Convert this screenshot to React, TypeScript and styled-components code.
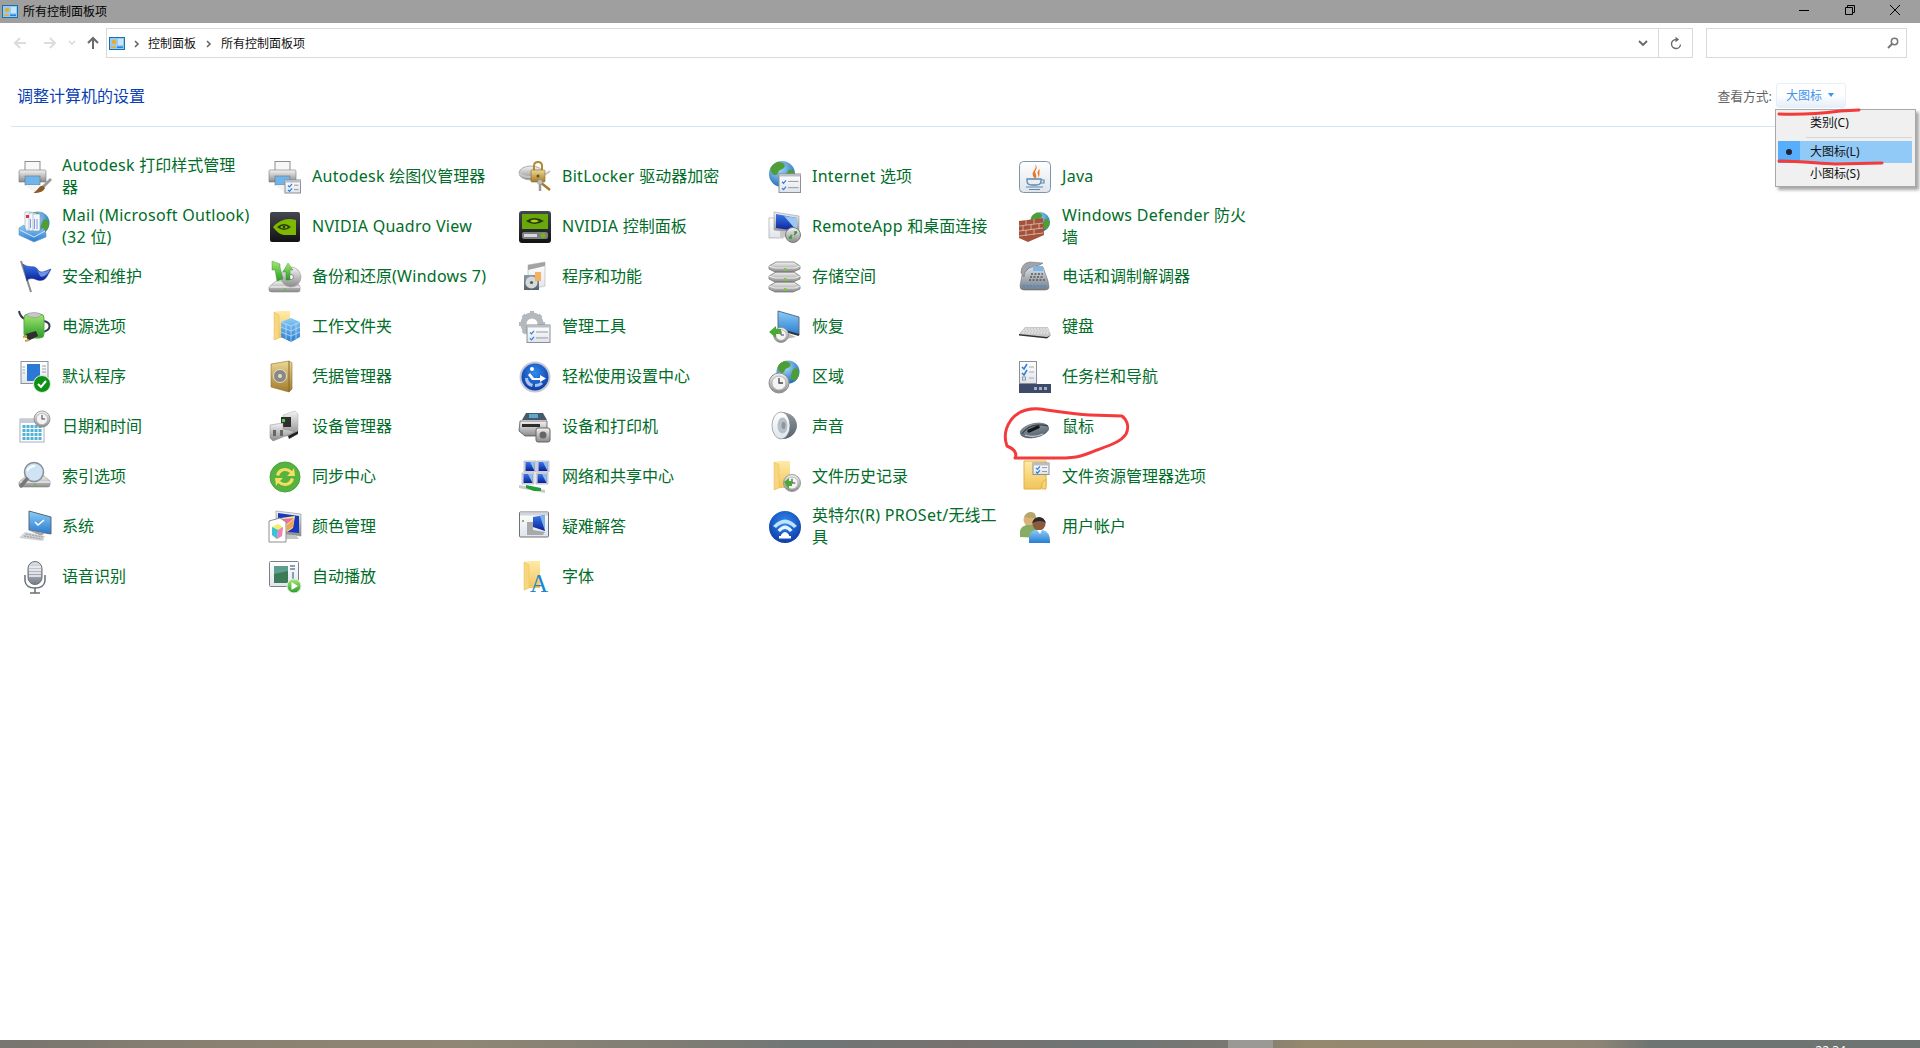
import React from "react";
import styled, { createGlobalStyle } from "styled-components";

const GlobalStyle = createGlobalStyle`
    html, body {
        margin: 0;
        padding: 0;
        background: #fff;
        overflow: hidden;
        font-family: "Noto Sans", "Noto Sans CJK SC", sans-serif;
    }
    * { box-sizing: border-box; }
`;

const Page = styled.div`
    position: relative;
    width: 1920px;
    height: 1048px;
    display: flex;
    flex-direction: column;
    overflow: hidden;
    background: #fff;
`;

const TitleBar = styled.div`
    height: 23px;
    flex: none;
    display: flex;
    align-items: center;
    background: #9f9f9f;
    padding: 0 2px 0 2px;
    font-size: 12px;
    color: #000;
`;

const TitleText = styled.span`
    margin-left: 5px;
    padding-bottom: 1px;
    flex: 1;
`;

const WindowButton = styled.div`
    width: 45.5px;
    height: 20px;
    display: flex;
    align-items: center;
    justify-content: center;
    margin-top: -3px;
`;

const NavRow = styled.div`
    height: 35px;
    flex: none;
    display: flex;
    padding: 5px 13px 0 0;
`;

const NavButtons = styled.div`
    width: 106px;
    flex: none;
    display: flex;
    align-items: center;
    padding-left: 13px;
`;

const NavButton = styled.div<{ $w: number }>`
    width: ${(p) => p.$w}px;
    display: flex;
    justify-content: flex-start;
`;

const AddressBox = styled.div`
    flex: 1;
    height: 30px;
    display: flex;
    align-items: center;
    border: 1px solid #d9d9d9;
    padding-left: 2px;
    font-size: 12px;
    color: #111;
`;

const Crumb = styled.span`
    white-space: nowrap;
`;

const CrumbSep = styled.span<{ $w: number }>`
    width: ${(p) => p.$w}px;
    display: flex;
    justify-content: center;
    margin-top: 1px;
`;

const AddressEnd = styled.div`
    margin-left: auto;
    height: 100%;
    display: flex;
`;

const AddressDrop = styled.div`
    width: 32px;
    display: flex;
    align-items: center;
    justify-content: center;
    border-right: 1px solid #d9d9d9;
`;

const AddressRefresh = styled.div`
    width: 33px;
    display: flex;
    align-items: center;
    justify-content: center;
`;

const SearchBox = styled.div`
    width: 201px;
    height: 30px;
    margin-left: 13px;
    border: 1px solid #d9d9d9;
    display: flex;
    align-items: center;
    justify-content: flex-end;
    padding-right: 7px;
`;

const HeaderRow = styled.div`
    height: 69px;
    flex: none;
    margin: 0 11px;
    padding: 6px 0 0 6px;
    display: flex;
    align-items: center;
    border-bottom: 1px solid #d8e6f2;
`;

const Heading = styled.h1`
    margin: 0;
    font-size: 16px;
    font-weight: 400;
    color: #0a3fb4;
    flex: 1;
`;

const ViewLabel = styled.span`
    font-size: 12.8px;
    color: #666;
    margin-right: 4px;
`;

const ViewButton = styled.div`
    width: 70px;
    height: 25px;
    margin-right: 63px;
    display: flex;
    align-items: center;
    padding-left: 9px;
    gap: 6px;
    font-size: 12px;
    color: #3f93f2;
    border: 1px solid #e6eef6;
    border-radius: 3px;
    background: linear-gradient(#fff 0%, #fff 45%, #e6eef8 100%);
`;

const ViewCaret = styled.span`
    width: 0;
    height: 0;
    border-left: 3.5px solid transparent;
    border-right: 3.5px solid transparent;
    border-top: 4px solid #3f93f2;
`;

const Grid = styled.div`
    flex: 1;
    display: grid;
    grid-template-columns: repeat(5, 250px);
    grid-auto-rows: 50px;
    align-content: start;
    padding: 25px 0 0 19px;
`;

const Item = styled.div`
    display: flex;
    align-items: center;
    gap: 11px;
`;

const Icon = styled.svg`
    width: 32px;
    height: 32px;
    flex: none;
    overflow: visible;
`;

const Label = styled.div`
    margin-bottom: 2px;
    font-size: 16px;
    line-height: 22px;
    color: #006d28;
`;

const LabelLine = styled.div`
    white-space: nowrap;
`;

const Latin = styled.span`
    letter-spacing: 0.28px;
`;

const Taskbar = styled.div`
    height: 8px;
    flex: none;
    display: flex;
    overflow: hidden;
    background: linear-gradient(90deg, #77756f 0%, #8b8172 12%, #8f8675 24%, #7d7c74 36%, #707676 42%, #76716f 50%, #6f7575 58%, #7a7872 64%, #95896f 68%, #8f8576 83%, #6e7472 86%, #6e7472 100%);
`;

const TaskActive = styled.div`
    width: 45px;
    margin-left: 1228px;
    background: #9a9996;
`;

const TaskClock = styled.div`
    margin-left: auto;
    margin-right: 74px;
    padding-top: 3px;
    font-size: 12px;
    line-height: 16px;
    color: #fff;
`;

const Menu = styled.div`
    position: absolute;
    top: 109px;
    left: 1775px;
    width: 141px;
    height: 78px;
    padding: 2px;
    background: #f0f0f0;
    border: 1px solid #a8a8a8;
    box-shadow: 3px 3px 3px rgba(0, 0, 0, 0.35);
    font-size: 12px;
    color: #111;
`;

const MenuItem = styled.div<{ $selected?: boolean; $h: number }>`
    height: ${(p) => p.$h}px;
    display: flex;
    align-items: center;
    margin-right: 1px;
    padding-bottom: 2px;
    background: ${(p) => (p.$selected ? "#91c9f7" : "transparent")};
`;

const MenuCheck = styled.div<{ $selected?: boolean }>`
    width: 22px;
    align-self: stretch;
    margin-right: 10px;
    margin-bottom: -2px;
    display: flex;
    align-items: center;
    justify-content: center;
    background: ${(p) => (p.$selected ? "#57aefb" : "transparent")};
`;

const MenuDot = styled.span`
    width: 6px;
    height: 6px;
    border-radius: 50%;
    background: #223;
`;

const MenuSep = styled.div`
    height: 1px;
    margin: 3px 1px 3px 28px;
    background: #d4d4d4;
`;

const Marks = styled.svg`
    position: absolute;
    top: 0;
    left: 0;
    width: 1920px;
    height: 1048px;
    pointer-events: none;
`;

const HiddenDefs = styled.svg`
    position: absolute;
    width: 0;
    height: 0;
`;

const Grads = () => (
    <HiddenDefs>
        <defs>
            {([
                ["gray", "#f4f4f4", "#8a8a8a"],
                ["steel", "#dfe4ea", "#747c86"],
                ["blue", "#8bcdf8", "#2a7bd0"],
                ["deep", "#3a78ea", "#0a1f96"],
                ["green", "#a5e872", "#2b9a28"],
                ["gold", "#ecd893", "#a27a2a"],
                ["folder", "#ffeaa8", "#f0c458"],
                ["dark", "#44494f", "#111214"],
                ["paper", "#ffffff", "#dfe4ec"],
                ["slate", "#8f9aa3", "#56626c"],
            ] as const).map(([id, a, b]) => (
                <linearGradient key={id} id={id} x1="0" y1="0" x2="0" y2="1">
                    <stop offset="0" stopColor={a} />
                    <stop offset="1" stopColor={b} />
                </linearGradient>
            ))}
            <radialGradient id="sphere" cx="0.4" cy="0.3" r="0.8">
                <stop offset="0" stopColor="#a5dcf8" />
                <stop offset="1" stopColor="#135fb4" />
            </radialGradient>
            <radialGradient id="ball" cx="0.5" cy="0.35" r="0.75">
                <stop offset="0" stopColor="#2f8cf0" />
                <stop offset="1" stopColor="#0b2f9c" />
            </radialGradient>
        </defs>
    </HiddenDefs>
);

const Globe = ({ x, y, r }: { x: number; y: number; r: number }) => (
    <g transform={`translate(${x} ${y}) scale(${r / 10})`}>
        <circle r="10" fill="url(#sphere)" />
        <path d="M-3-9.5C0-9 3-8 2-5.500S-2-4-3-1-7 1-8.500-2-7-8-3-9.500zM5-3C8-4 10-2 9.500 2S6 8 4 7 2 2 5-3z" fill="#4f9e35" />
    </g>
);

const Clock = ({ x, y, r }: { x: number; y: number; r: number }) => (
    <g transform={`translate(${x} ${y}) scale(${r / 10})`}>
        <circle r="10" fill="url(#gray)" stroke="#8d8d8d" />
        <circle r="7" fill="#f4f4f4" stroke="#b5b5b5" />
        <path d="M0-5V0H4" fill="none" stroke="#444" strokeWidth="1.300" />
    </g>
);

const Folder = ({ x = 0, y = 0 }: { x?: number; y?: number }) => (
    <g transform={`translate(${x} ${y})`}>
        <path d="M0 1 5 0H16V27H5L0 29Z" fill="url(#folder)" />
        <path d="M0 1V29L5 27V4Z" fill="#f7d680" stroke="#e5bc58" strokeWidth=".5" />
    </g>
);

const ListWindow = ({ x, y, w, h }: { x: number; y: number; w: number; h: number }) => (
    <g transform={`translate(${x} ${y})`}>
        <rect width={w} height={h} fill="url(#paper)" stroke="#8c8f96" />
        <rect width={w} height="2.500" fill="#b9bdc5" />
        <path d={`M3 ${h * 0.42}l1.500 1.500 2.500-3M3 ${h * 0.76}l1.500 1.500 2.500-3`} stroke="#2b7fd8" strokeWidth="1.200" fill="none" />
        <path d={`M9 ${h * 0.4}H${w - 2}M9 ${h * 0.74}H${w - 2}`} stroke="#999" />
    </g>
);

const Printer = () => (
    <>
        <rect x="6" y="0.500" width="15" height="10" fill="#f8f8f8" stroke="#8d8d8d" />
        <path d="M1 9H26Q27 9 27 11V21H21V18H6V21H0V11Q0 9 1 9Z" fill="url(#gray)" stroke="#777" strokeWidth=".6" />
        <rect x="6" y="15" width="15" height="9" fill="#6fb4ea" stroke="#777" strokeWidth=".6" />
        <path d="M6 24H21L23 31H15L6 24Z" fill="#f2f2f2" />
    </>
);

const DriveBase = ({ y = 20 }: { y?: number }) => (
    <g transform={`translate(0 ${y})`}>
        <path d="M7 0H25L31 5V9Q31 11 29 11H3Q0 11 0 9V6Z" fill="url(#gray)" stroke="#8c8c8c" strokeWidth=".6" />
        <path d="M0.500 6H31" stroke="#fff" />
        <rect x="15" y="7.500" width="2" height="2" fill="#56c23d" />
    </g>
);

const icons: Record<string, React.ReactNode> = {
    printerBrush: (
        <>
            <Printer />
            <path d="M31 17 33 19 25 27 23 25Z" fill="#9a9a9a" />
            <path d="M23.500 24.500 26 27C25 30 21 32 14.500 32 18 30 20 25 23.500 24.500Z" fill="#8a5a2c" />
        </>
    ),
    printerList: (
        <>
            <Printer />
            <ListWindow x={16} y={19} w={15.500} h={13} />
        </>
    ),
    bitlocker: (
        <>
            <ellipse cx="12" cy="12" rx="12" ry="7" fill="url(#gray)" stroke="#aaa" />
            <path d="M1 12C1 17 23 18 31 10" fill="none" stroke="#c7c7c7" strokeWidth="2" />
            <path d="M15 10V5Q15 1 19 1T23 5V10" fill="none" stroke="#b08a34" strokeWidth="2" />
            <rect x="12" y="9" width="14" height="12" rx="1" fill="url(#gold)" stroke="#8a6a22" strokeWidth=".6" />
            <circle cx="19" cy="15" r="1.500" fill="#6a4f14" />
            <path d="M21 21 31 29" stroke="#a27a2a" strokeWidth="2.500" />
            <path d="M21 20V30" stroke="#9b9b9b" strokeWidth="2.500" />
            <circle cx="21" cy="21" r="2.500" fill="#c0c0c0" stroke="#888" strokeWidth=".5" />
        </>
    ),
    internet: (
        <>
            <Globe x={13} y={13} r={13} />
            <ListWindow x={10} y={13} w={21.500} h={18.500} />
        </>
    ),
    java: (
        <>
            <rect x=".5" y=".5" width="31" height="31" rx="4" fill="url(#paper)" stroke="#7e96ad" />
            <path d="M16 3C19 8 12 10 14 15 15 17 16 17 16 18 20 14 14 12 17 9 18 7 18 5 16 3Z" fill="#e8772a" />
            <path d="M21 8C17 11 19 13 19.500 15 19.500 16 18.500 17 18.500 17 22 15 19.500 12 21 8Z" fill="#e8772a" />
            <path d="M8 18H22V20Q22 24 17 24H13Q8 24 8 20Z" fill="none" stroke="#5c88aa" strokeWidth="1.300" />
            <path d="M22 19H25V22H21M7 26H24M10 28.500H21" fill="none" stroke="#5c88aa" strokeWidth="1.200" />
        </>
    ),
    mail: (
        <>
            <Globe x={19} y={12} r={11.500} />
            <rect x="6" y="1" width="7" height="18" fill="#f4f6fb" stroke="#93a6c6" strokeWidth=".6" />
            <rect x="10" y="2" width="7" height="18" fill="#f4f6fb" stroke="#93a6c6" strokeWidth=".6" />
            <rect x="14" y="3" width="7" height="18" fill="#f4f6fb" stroke="#93a6c6" strokeWidth=".6" />
            <rect x="7" y="4" width="3" height="3" fill="#e23a2a" />
            <path d="M11.500 8V17M15.500 8V18M18 8V18" stroke="#7f9dce" />
            <path d="M0 17 5 14 7 20H20L24 17 27 22V26L15 31 0 24Z" fill="url(#blue)" stroke="#6f94bf" strokeWidth=".6" />
            <path d="M1 19 15 26 26 20" fill="none" stroke="#d4e6f7" />
        </>
    ),
    nvidiaQ: (
        <>
            <rect x="1" y="1" width="30" height="30" rx="2" fill="url(#dark)" />
            <path d="M4 16Q14 5 27 9V24H15Q9 23 4 16Z" fill="#7fb800" />
            <path d="M8 16Q15 10 22 16 15 22 8 16Z" fill="#2a3d05" />
            <path d="M11 16Q15 13 19 16 15 19 11 16Z" fill="#9ccf1d" />
            <circle cx="15" cy="16" r="1.500" fill="#2a3d05" />
        </>
    ),
    nvidiaC: (
        <>
            <rect y="0" width="32" height="32" rx="3" fill="url(#dark)" />
            <rect x="3" y="3" width="26" height="15" fill="#6aa80a" />
            <path d="M7 10Q15 4 25 10 15 16 7 10Z" fill="#253608" />
            <path d="M11 10Q15 7 20 10 15 13 11 10Z" fill="#a3d41f" />
            <rect x="3" y="21" width="26" height="7" rx="2" fill="#7c7f7d" />
            <rect x="5" y="23" width="13" height="3" fill="#d8d8d8" />
            <circle cx="24" cy="24.500" r="2.500" fill="#74b51a" />
        </>
    ),
    remote: (
        <>
            <rect x="0" y="7" width="14" height="20" fill="url(#paper)" stroke="#9a9a9a" strokeWidth=".6" />
            <path d="M5 1 30 5V22L5 19Z" fill="url(#gray)" stroke="#9a9a9a" strokeWidth=".6" />
            <path d="M7 3 28 7V20L7 17Z" fill="url(#deep)" />
            <path d="M15 5 28 7V20Z" fill="#9bc7f5" />
            <path d="M11 20 H20V26H11Z" fill="#c7c7c7" />
            <circle cx="24" cy="24" r="7.500" fill="url(#gray)" stroke="#7d7d7d" />
            <path d="M20 27 23 24M28 21 25 24M20 27H23M28 21H25" stroke="#2e9a33" strokeWidth="1.500" />
        </>
    ),
    defender: (
        <>
            <Globe x={21} y={11} r={10} />
            <path d="M0 10 24 7 25 24 9 31 0 27Z" fill="#a5523a" />
            <path d="M0 15 24 12M0 20 24 17M0 25 24 22M7 9V14M15 8V13M4 15V20M12 14V19M20 13V18M7 19V25M15 18V24" stroke="#e0c3b4" strokeWidth=".8" />
        </>
    ),
    flag: (
        <>
            <path d="M2 0 12 31" stroke="#8a8a8a" strokeWidth="2" />
            <path d="M4 3C10 8 16 3 19 9 22 13 26 10 32 8 29 14 27 18 24 19 18 21 16 16 10 18 8 18 9 19 8 20Z" fill="url(#deep)" stroke="#1c2f8e" strokeWidth=".5" />
            <path d="M18 9C21 13 26 11 31 9 28 14 24 17 21 15Z" fill="#6d93e6" />
        </>
    ),
    backup: (
        <>
            <DriveBase y={20} />
            <circle cx="22" cy="16" r="10" fill="url(#gray)" stroke="#999" strokeWidth=".6" />
            <circle cx="22" cy="16" r="2.500" fill="#fff" stroke="#888" />
            <path d="M3 0 11 3 11 6 14 18 8 20 6 9 3 9Z" fill="url(#green)" stroke="#2b8a2a" strokeWidth=".4" />
            <path d="M17 19 17 11 14 11 19 2 24 9 21 9 21 19Z" fill="url(#green)" stroke="#2b8a2a" strokeWidth=".4" />
        </>
    ),
    programs: (
        <>
            <path d="M9 4 26 1V25L9 29Z" fill="url(#paper)" stroke="#b4b4b4" strokeWidth=".6" />
            <path d="M9 4 26 1V5L9 9Z" fill="#a3a3a3" />
            <rect x="5" y="14" width="15" height="15" fill="url(#slate)" />
            <circle cx="12.500" cy="21.500" r="6" fill="#d4dadc" />
            <circle cx="12.500" cy="21.500" r="1.600" fill="#555" />
            <rect x="16" y="11" width="6" height="9" fill="#f5b060" />
        </>
    ),
    storage: (
        <>
            {[21, 11, 1].map((y) => (
                <g key={y} transform={`translate(0 ${y})`}>
                    <path d="M7 0H25L31 4V7L24 10H6L0 7V4Z" fill="url(#gray)" stroke="#6a6a6a" strokeWidth=".7" />
                    <path d="M6 6H26L31 4M6 6 0 4" fill="none" stroke="#eee" />
                    <rect x="15" y="6" width="2.500" height="2.500" fill="#7ccf3b" />
                </g>
            ))}
        </>
    ),
    phone: (
        <>
            <path d="M1 25 3 14 12 5 24 6 29 20 30 26Q30 29 26 29H5Q1 29 1 25Z" fill="url(#steel)" stroke="#707070" strokeWidth=".6" />
            <path d="M2 12Q2 2 11 1L24 2Q21 5 13 6 5 8 5 16Z" fill="#9fa5ab" stroke="#666" strokeWidth=".5" />
            <rect x="14" y="5" width="10" height="5" fill="#7fb6e3" />
            <path d="M12 13H24M11 16H25M10 19H26" stroke="#555" strokeDasharray="2 1.500" strokeWidth="1.500" />
            <path d="M4 25H27" stroke="#4f8fc9" strokeWidth="2" strokeDasharray="2 1.500" />
        </>
    ),
    power: (
        <>
            <path d="M0 0Q1 6 6 8M25 10C33 12 32 19 24 21L14 24" fill="none" stroke="#333b4d" strokeWidth="2" />
            <rect x="5" y="3" width="20" height="24" rx="4" fill="url(#green)" stroke="#5fa84a" />
            <ellipse cx="15" cy="4" rx="7" ry="2.500" fill="#c7c7c7" stroke="#888" strokeWidth=".5" />
            <path d="M7 23 17 20 19 25 9 30Z" fill="#2f2f2f" />
            <path d="M4 26 8 25M6 30 10 29" stroke="#c9a33e" strokeWidth="2" />
        </>
    ),
    workFolders: (
        <>
            <Folder x={5} y={0} />
            <path d="M12 11 22 7 31 11V26L22 31 12 26Z" fill="url(#blue)" />
            <path d="M12 11 22 15 31 11M22 15V31M12 16 22 20 31 16M12 21 22 25 31 21M17 13V28M27 13V28" fill="none" stroke="#c6e4f8" strokeWidth=".7" />
        </>
    ),
    admin: (
        <>
            <circle cx="13" cy="13" r="8.500" fill="none" stroke="#b4b9be" strokeWidth="6" />
            <path d="M13 0V5M13 21V26M0 13H5M21 13H26M4 4 8 8M22 4 18 8M4 22 8 18" stroke="#b4b9be" strokeWidth="4" />
            <ListWindow x={8} y={14} w={23} h={17.500} />
        </>
    ),
    recovery: (
        <>
            <path d="M9 0 30 6V24L9 18Z" fill="url(#blue)" stroke="#5d6e80" />
            <path d="M9 18 30 24" stroke="#333" strokeWidth="2" />
            <path d="M14 20 27 26 17 28Z" fill="#bcbcbc" />
            <Clock x={12} y={24} r={7.500} />
            <path d="M0 21 7 15V18H12V23H7V27Z" fill="#4aa934" />
        </>
    ),
    keyboard: (
        <>
            <path d="M6 16H29L32 24 28 27 0 23Z" fill="#c9c9c9" />
            <path d="M0 23 28 26 32 24 28 27.500 0 24.500Z" fill="#333" />
            <path d="M6 18H29M4 20H30M3 22H30" stroke="#efefef" strokeDasharray="2 1" />
        </>
    ),
    defaults: (
        <>
            <rect x="2" y="0.500" width="27" height="22" fill="url(#paper)" stroke="#8d919a" />
            <rect x="8" y="3" width="13" height="17" fill="#2b78d6" />
            <path d="M23 5H27M23 8H27M23 11H27M3.500 6H6M3.500 9H6M3.500 12H6" stroke="#9fa5ae" />
            <circle cx="23" cy="23" r="8.500" fill="#0e8f16" stroke="#e4f0e4" />
            <path d="M19 23 22 26 27 20" fill="none" stroke="#fff" strokeWidth="2" />
        </>
    ),
    safe: (
        <>
            <path d="M2 3 20 0 23 2V28L20 31 2 26Z" fill="url(#gold)" stroke="#8d6f2a" strokeWidth=".6" />
            <path d="M20 0V31" stroke="#85692a" />
            <circle cx="11" cy="15" r="6.500" fill="#8a8880" stroke="#eee" strokeWidth=".8" />
            <circle cx="11" cy="15" r="2" fill="#ddd" />
        </>
    ),
    ease: (
        <>
            <circle cx="16" cy="16" r="15.500" fill="#c4c9d4" />
            <circle cx="16" cy="16" r="13.500" fill="url(#ball)" />
            <circle cx="13" cy="8" r="2" fill="#fff" />
            <path d="M11 12 15 17H21V14L27 17.500 21 21V19H13L9 14Z" fill="#fff" />
            <path d="M6 17Q6 24 13 26L14 23Q9 21 9 17ZM16 26Q21 26 24 23L22 21Q20 23 16 23Z" fill="#a8c3ec" />
        </>
    ),
    region: (
        <>
            <Globe x={19} y={11} r={11.500} />
            <Clock x={10} y={22} r={10} />
        </>
    ),
    taskbar: (
        <>
            <rect x=".5" y=".5" width="17" height="22" fill="url(#paper)" stroke="#8c8f96" />
            <path d="M3 6 5 8 8 3M3 12 5 14 8 9" fill="none" stroke="#2b7fd8" strokeWidth="1.500" />
            <rect x="3.500" y="16" width="3" height="3" fill="none" stroke="#999" />
            <path d="M10 6H15M10 11H15M10 17H15" stroke="#aaa" />
            <rect x="0" y="23" width="32" height="9" fill="#3d4a69" />
            <path d="M15 26h3v3h-3zM20 26h3v3h-3zM25 26h3v3h-3z" fill="#a7aebd" />
        </>
    ),
    date: (
        <>
            <rect x="1" y="8" width="24" height="23" fill="#fff" stroke="#a8b0ba" />
            <rect x="1" y="8" width="24" height="4" fill="#c4ccd6" />
            {[0, 1, 2, 3].map((r) =>
                [0, 1, 2, 3, 4].map((c) => <rect key={`${r}${c}`} x={3.500 + c * 4} y={14 + r * 4} width="3" height="3" fill="#4fb2d8" />),
            )}
            <Clock x={23} y={8} r={8} />
        </>
    ),
    devmgr: (
        <>
            <path d="M14 4 26 0 29 3V20L19 25H14Z" fill="url(#gray)" stroke="#aaa" strokeWidth=".5" />
            <rect x="12" y="6" width="10" height="10" fill="#2e2e2e" />
            <rect x="13" y="8" width="3" height="3" fill="#4fd14f" />
            <path d="M1 14 14 12V18L24 20V22L4 30 1 27Z" fill="url(#gray)" stroke="#888" strokeWidth=".5" />
            <rect x="4" y="19" width="3" height="6" fill="#666" />
            <rect x="11" y="19" width="3" height="6" fill="#666" />
            <path d="M19 25 29 20 29 23 20 28Z" fill="#222" />
        </>
    ),
    devices: (
        <>
            <path d="M7 2H24L28 9H3Z" fill="#47596b" />
            <rect x="10" y="3" width="9" height="4" fill="#5ba8d0" />
            <path d="M1 10H28V20L24 25H6L0 20Z" fill="url(#gray)" stroke="#444" strokeWidth=".7" />
            <rect x="3" y="13" width="18" height="3" fill="#2d2d2d" />
            <rect x="17" y="17" width="14" height="14" rx="2" fill="url(#gray)" stroke="#666" />
            <circle cx="24" cy="24" r="3.500" fill="#666" />
        </>
    ),
    sound: (
        <>
            <path d="M12 1C22 1 28 8 28 14.500S22 28 14 28Z" fill="url(#slate)" />
            <ellipse cx="12" cy="14.500" rx="9" ry="13.500" fill="url(#paper)" stroke="#777" strokeWidth=".6" />
            <ellipse cx="13.500" cy="14.500" rx="5" ry="8" fill="#b6c0c8" />
            <ellipse cx="14.500" cy="14.500" rx="2" ry="3.500" fill="#8a96a0" />
        </>
    ),
    mouse: (
        <>
            <ellipse cx="15.500" cy="19.500" rx="14.500" ry="7" transform="rotate(-12 15.500 19.500)" fill="url(#slate)" stroke="#3f4a54" strokeWidth=".5" />
            <path d="M3 23C8 15 18 12 29 15" fill="none" stroke="#39424a" strokeWidth="1.200" />
            <path d="M10 20 19 16" stroke="#15181b" strokeWidth="3.500" strokeLinecap="round" />
            <path d="M6 24Q14 27 24 23" fill="none" stroke="#c4ccd2" strokeWidth="1.200" />
        </>
    ),
    index: (
        <>
            <DriveBase y={15} />
            <circle cx="15" cy="11" r="9.500" fill="#cfe3f5" stroke="#858f99" strokeWidth="1.500" />
            <path d="M8 10Q11 5 16 5" stroke="#fff" strokeWidth="2" fill="none" />
            <path d="M8 18 2 25" stroke="#777" strokeWidth="3.500" strokeLinecap="round" />
        </>
    ),
    sync: (
        <>
            <circle cx="16" cy="16" r="15" fill="#56b33f" stroke="#47a336" />
            <path d="M7 14Q9 7 16 7 20 7 23 10L25 7 26 15 18 15 21 12Q19 10 16 10 12 10 10 15Z" fill="#f5de63" />
            <path d="M25 18Q23 25 16 25 12 25 9 22L7 25 6 17 14 17 11 20Q13 22 16 22 20 22 22 17Z" fill="#f5de63" />
        </>
    ),
    network: (
        <>
            {[[5, 0], [18, 0], [3, 12], [17, 12]].map(([x, y]) => (
                <g key={`${x}${y}`}>
                    <path d={`M${x} ${y}H${x + 12}V${y + 11}H${x}Z`} fill="#e2e4e8" stroke="#8b8f96" strokeWidth=".5" />
                    <path d={`M${x + 1.500} ${y + 1}H${x + 10.500}V${y + 10}H${x + 1.500}Z`} fill="url(#deep)" />
                    <path d={`M${x + 6} ${y + 1}H${x + 10.500}V${y + 10}Z`} fill="#8fbdf0" />
                </g>
            ))}
            <path d="M0 24 26 29V32L0 27Z" fill="#c9c9c9" />
            <path d="M7 24 22 27 22 30 15 30 7 27Z" fill="#1f9e36" />
        </>
    ),
    history: (
        <>
            <Folder x={5} y={0} />
            <Clock x={23} y={22} r={8.500} />
            <path d="M15 21 20 17V20H23V25H20V29Z" fill="#4aa934" />
        </>
    ),
    explorer: (
        <>
            <path d="M5 0H27V26H22V28H5Z" fill="url(#folder)" stroke="#e3b33f" />
            <path d="M27 18V28H23V22Z" fill="#f7d680" stroke="#e3b33f" />
            <ListWindow x={14} y={2} w={16} h={11.500} />
        </>
    ),
    system: (
        <>
            <path d="M10 0 32 6V23L10 19Z" fill="url(#blue)" stroke="#596673" />
            <path d="M16 11 19 14 25 9" fill="none" stroke="#fff" strokeWidth="1.500" />
            <path d="M9 19 26 22 22 25Z" fill="#a5a5a5" />
            <path d="M6 21 26 25 24 30 0 27Z" fill="#d0d3d5" />
            <path d="M7 23 24 26M5 25 23 28" stroke="#9a9d9f" strokeDasharray="2 1" />
        </>
    ),
    color: (
        <>
            <path d="M7 0 32 3V25L7 22Z" fill="url(#gray)" stroke="#8b8b8b" strokeWidth=".6" />
            <path d="M9 2 30 5V22L9 20Z" fill="#1a37c0" />
            <path d="M12 7 26 5 24 17 18 21 13 15Z" fill="#f6ef86" />
            <path d="M13 8 25 7 18 13Z" fill="#ee6fa3" />
            <path d="M18 14 25 8 24 16 18 20Z" fill="#f3a15a" />
            <path d="M14 24H27L30 28H18Z" fill="#c5c5c5" />
            <path d="M0 10 11 7 17 11V31H0Z" fill="#fff" stroke="#8e8e8e" />
            <path d="M3 16 9 13 14 16 13 25 8 28 3 24Z" fill="#f0ef66" />
            <path d="M3 16 9 19 8 28 3 24Z" fill="#38c3d8" />
            <path d="M9 19 14 16 13 25 8 28Z" fill="#ef7fc0" />
        </>
    ),
    trouble: (
        <>
            <rect x=".5" y="1" width="29" height="25" rx="1" fill="url(#paper)" stroke="#6e7178" />
            <rect x="1" y="1.500" width="28" height="3" fill="#d2d5db" />
            <path d="M14 6 26 4V20L14 16Z" fill="url(#deep)" />
            <path d="M21 5 26 4V20Z" fill="#7cb0ee" />
            <path d="M8 11H14V24H8ZM14 19 26 21 24 24H14Z" fill="#a7aaa8" />
            <rect x="3" y="9" width="2" height="2" fill="#6ccb3b" />
        </>
    ),
    intel: (
        <>
            <circle cx="16" cy="16" r="16" fill="url(#ball)" />
            <path d="M4 15Q16 2 28 15L25 17Q16 8 7 17Z" fill="#bfe2fb" />
            <path d="M8.500 19Q16 10 23.500 19L21 21Q16 15 11 21Z" fill="#e6f4fe" />
            <path d="M12 24Q16 18 20 24L20 25H12Z" fill="#fff" />
            <rect x="10" y="25" width="12" height="2.500" fill="#fff" />
        </>
    ),
    users: (
        <>
            <circle cx="11" cy="9" r="6.500" fill="#d9b37a" />
            <path d="M5 6Q7 1 12 1T17 7L10 7Z" fill="#b8a56a" />
            <path d="M1 26V20Q2 15 8 14H14Q20 15 20 22V27Z" fill="#86ad63" />
            <circle cx="20" cy="13" r="6.500" fill="#8a5a3c" />
            <path d="M13 12Q15 6 20 6T27 12Q22 8 13 12Z" fill="#2a2a2a" />
            <path d="M10 32V26Q11 20 17 19H24Q31 21 31 30V32Z" fill="url(#blue)" />
            <path d="M18 19 21 23 23 19Z" fill="#fff" />
        </>
    ),
    speech: (
        <>
            <rect x="9" y="0.500" width="14" height="23" rx="7" fill="url(#steel)" stroke="#6a6d74" />
            <path d="M10 6H22M10 9H22M10 12H22M10 15H22" stroke="#f2f2f7" strokeWidth="1.300" />
            <path d="M6 14V20Q7 27 16 27T26 20V14" fill="none" stroke="#6a6d74" strokeWidth="1.500" />
            <path d="M16 27V32M11 32H21" stroke="#6a6d74" strokeWidth="1.500" />
        </>
    ),
    autoplay: (
        <>
            <rect x=".5" y="0.500" width="29" height="25" rx="1" fill="url(#paper)" stroke="#7d8087" />
            <rect x="5" y="5" width="14" height="17" fill="#5f9e8e" />
            <path d="M5 13 19 10V22H5Z" fill="#3d7a57" />
            <path d="M21 5H26M21 8H26M24 11V20" stroke="#67819c" strokeWidth="1.500" />
            <circle cx="25" cy="25" r="7" fill="url(#green)" stroke="#e4f0e4" />
            <path d="M22.500 21 29 25 22.500 29Z" fill="#fff" />
        </>
    ),
    fonts: (
        <>
            <Folder x={5} y={0} />
            <text x="11" y="31" fontSize="25" fontFamily="'Liberation Serif', serif" fill="#1c86d0">A</text>
        </>
    ),
};

// "\n" marks where the control panel wraps a long name
const items: [string, string][] = [
    ["printerBrush", "Autodesk 打印样式管理\n器"],
    ["printerList", "Autodesk 绘图仪管理器"],
    ["bitlocker", "BitLocker 驱动器加密"],
    ["internet", "Internet 选项"],
    ["java", "Java"],
    ["mail", "Mail (Microsoft Outlook)\n(32 位)"],
    ["nvidiaQ", "NVIDIA Quadro View"],
    ["nvidiaC", "NVIDIA 控制面板"],
    ["remote", "RemoteApp 和桌面连接"],
    ["defender", "Windows Defender 防火\n墙"],
    ["flag", "安全和维护"],
    ["backup", "备份和还原(Windows 7)"],
    ["programs", "程序和功能"],
    ["storage", "存储空间"],
    ["phone", "电话和调制解调器"],
    ["power", "电源选项"],
    ["workFolders", "工作文件夹"],
    ["admin", "管理工具"],
    ["recovery", "恢复"],
    ["keyboard", "键盘"],
    ["defaults", "默认程序"],
    ["safe", "凭据管理器"],
    ["ease", "轻松使用设置中心"],
    ["region", "区域"],
    ["taskbar", "任务栏和导航"],
    ["date", "日期和时间"],
    ["devmgr", "设备管理器"],
    ["devices", "设备和打印机"],
    ["sound", "声音"],
    ["mouse", "鼠标"],
    ["index", "索引选项"],
    ["sync", "同步中心"],
    ["network", "网络和共享中心"],
    ["history", "文件历史记录"],
    ["explorer", "文件资源管理器选项"],
    ["system", "系统"],
    ["color", "颜色管理"],
    ["trouble", "疑难解答"],
    ["intel", "英特尔(R) PROSet/无线工\n具"],
    ["users", "用户帐户"],
    ["speech", "语音识别"],
    ["autoplay", "自动播放"],
    ["fonts", "字体"],
];

// latin runs are a touch wider in the original font than in Noto Sans
const renderLine = (line: string) =>
    line.split(/([\x20-\x7e]+)/).map((part, i) => (i % 2 ? <Latin key={i}>{part}</Latin> : part));

const PanelGlyph = () => (
    <svg width="16" height="13" viewBox="0 0 16 13">
        <rect x=".5" y=".5" width="15" height="12" fill="#8fcdf5" stroke="#1d6fa8" />
        <circle cx="5" cy="5" r="2.200" fill="#f5a623" />
        <path d="M9 3H14M9 5H14M9 7H14" stroke="#fff" />
        <rect x="2" y="9.500" width="5" height="1.500" fill="#f5a623" />
        <rect x="8" y="9.500" width="6" height="1.500" fill="#2b7fd8" />
    </svg>
);

const Arrow = ({ dir, color }: { dir: "left" | "right" | "up"; color: string }) => {
    const d = {
        left: "M13 7H2M7 2 2 7 7 12",
        right: "M1 7H12M7 2 12 7 7 12",
        up: "M7 13V2M2 7 7 2 12 7",
    }[dir];
    return (
        <svg width="14" height="14" viewBox="0 0 14 14">
            <path d={d} fill="none" stroke={color} strokeWidth="2" />
        </svg>
    );
};

const SmallChevron = () => (
    <svg width="6" height="8" viewBox="0 0 6 8">
        <path d="M1 1 4 4 1 7" fill="none" stroke="#666" strokeWidth="1.600" />
    </svg>
);

export default function App() {
    return (
        <Page>
            <GlobalStyle />
            <Grads />
            <TitleBar>
                <PanelGlyph />
                <TitleText>所有控制面板项</TitleText>
                <WindowButton>
                    <svg width="10" height="10" viewBox="0 0 10 10">
                        <path d="M0 5.500H10" stroke="#000" />
                    </svg>
                </WindowButton>
                <WindowButton>
                    <svg width="10" height="10" viewBox="0 0 10 10">
                        <path d="M.5 2.500H7.500V9.500H.5ZM2.500 2.500V.5H9.500V7.500H7.500" fill="none" stroke="#000" />
                    </svg>
                </WindowButton>
                <WindowButton>
                    <svg width="10" height="10" viewBox="0 0 10 10">
                        <path d="M0 0 10 10M10 0 0 10" stroke="#000" />
                    </svg>
                </WindowButton>
            </TitleBar>
            <NavRow>
                <NavButtons>
                    <NavButton $w={30}>
                        <Arrow dir="left" color="#dcdcdc" />
                    </NavButton>
                    <NavButton $w={25}>
                        <Arrow dir="right" color="#dcdcdc" />
                    </NavButton>
                    <NavButton $w={18}>
                        <svg width="8" height="6" viewBox="0 0 8 6">
                            <path d="M1 1 4 4 7 1" fill="none" stroke="#d8d8d8" strokeWidth="1.500" />
                        </svg>
                    </NavButton>
                    <NavButton $w={14}>
                        <Arrow dir="up" color="#6a6a6a" />
                    </NavButton>
                </NavButtons>
                <AddressBox>
                    <PanelGlyph />
                    <CrumbSep $w={23}>
                        <SmallChevron />
                    </CrumbSep>
                    <Crumb>控制面板</Crumb>
                    <CrumbSep $w={25}>
                        <SmallChevron />
                    </CrumbSep>
                    <Crumb>所有控制面板项</Crumb>
                    <AddressEnd>
                        <AddressDrop>
                            <svg width="10" height="7" viewBox="0 0 10 7">
                                <path d="M1 1 5 5 9 1" fill="none" stroke="#666" strokeWidth="1.800" />
                            </svg>
                        </AddressDrop>
                        <AddressRefresh>
                            <svg width="12" height="13" viewBox="0 0 12 13">
                                <path d="M5.500 .5 8 2.500 5.500 4.500M7.500 2.500H6A4.500 4.500 0 1 0 10.500 7.500" fill="none" stroke="#6a6a6a" strokeWidth="1.400" />
                            </svg>
                        </AddressRefresh>
                    </AddressEnd>
                </AddressBox>
                <SearchBox>
                    <svg width="12" height="12" viewBox="0 0 12 12">
                        <circle cx="7.500" cy="4.500" r="3.200" fill="none" stroke="#777" strokeWidth="1.500" />
                        <path d="M5 7 1 11" stroke="#777" strokeWidth="2" />
                    </svg>
                </SearchBox>
            </NavRow>
            <HeaderRow>
                <Heading>调整计算机的设置</Heading>
                <ViewLabel>查看方式:</ViewLabel>
                <ViewButton>
                    大图标
                    <ViewCaret />
                </ViewButton>
            </HeaderRow>
            <Grid>
                {items.map(([icon, label]) => (
                    <Item key={label}>
                        <Icon viewBox="0 0 32 32">{icons[icon]}</Icon>
                        <Label>
                            {label.split("\n").map((line) => (
                                <LabelLine key={line}>{renderLine(line)}</LabelLine>
                            ))}
                        </Label>
                    </Item>
                ))}
            </Grid>
            <Taskbar>
                <TaskActive />
                <TaskClock>22:34</TaskClock>
            </Taskbar>
            <Menu>
                <MenuItem $h={22}>
                    <MenuCheck />
                    类别(C)
                </MenuItem>
                <MenuSep />
                <MenuItem $selected $h={22}>
                    <MenuCheck $selected>
                        <MenuDot />
                    </MenuCheck>
                    大图标(L)
                </MenuItem>
                <MenuItem $h={22}>
                    <MenuCheck />
                    小图标(S)
                </MenuItem>
            </Menu>
            <Marks viewBox="0 0 1920 1048">
                <g fill="none" stroke="#f43a3a" strokeLinecap="round" strokeLinejoin="round">
                    <path d="M1779 114C1800 115 1825 113 1840 111L1859 110" strokeWidth="3" />
                    <path d="M1779 161C1800 161 1815 163 1835 164L1882 163" strokeWidth="3" />
                    <path d="M1015 458C1018 452 1012 448 1007 446 1004 438 1004 430 1011 420 1018 411 1028 408 1040 409 1055 411 1070 414 1090 415L1122 416C1128 421 1129 428 1126 434 1121 442 1108 446 1097 450 1085 455 1078 458 1060 458Z" strokeWidth="3" />
                </g>
            </Marks>
        </Page>
    );
}
